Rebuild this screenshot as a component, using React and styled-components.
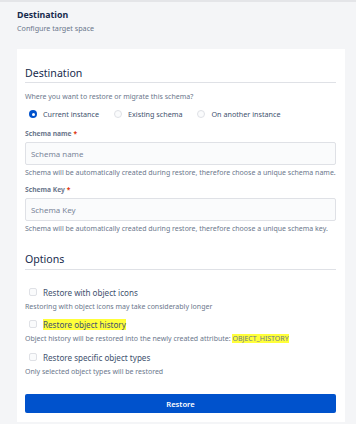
import React from "react";
import styled, { createGlobalStyle } from "styled-components";

const GlobalStyle = createGlobalStyle`
  html, body {
    margin: 0;
    padding: 0;
    background: #f4f5f7;
  }
  body {
    font-family: "Noto Sans", "Open Sans", sans-serif;
    color: #172b4d;
  }
`;

const Page = styled.div`
  width: 356px;
  height: 424px;
  box-sizing: border-box;
  border-top: 2px solid #e4e5e8;
  padding: 7px 11px 0 17px;
  overflow: hidden;
`;

const PageTitle = styled.div`
  font-size: 8.8px;
  font-weight: 700;
  line-height: 12px;
  color: #172b4d;
`;

const PageSub = styled.div`
  font-size: 7.2px;
  line-height: 10px;
  color: #6b778c;
  margin: 2px 0 16px;
`;

const Card = styled.div`
  background: #fff;
  padding: 17px 9px 9px 8px;
  display: flex;
  flex-direction: column;
`;

const SectionTitle = styled.div`
  font-size: 10.6px;
  line-height: 14px;
  color: #172b4d;
  padding-bottom: ${(p) => p.$pb || 2}px;
  border-bottom: 1px solid #dfe1e6;
  margin-top: ${(p) => p.$mt || 0}px;
`;

const Hint = styled.div`
  font-size: 7px;
  line-height: 10px;
  color: #6b778c;
  white-space: nowrap;
  margin-top: ${(p) => p.$mt || 3}px;
`;

const RadioRow = styled.div`
  display: flex;
  align-items: center;
  gap: 15px;
  height: 10px;
  padding-left: 4px;
  margin-top: 7px;
`;

const RadioItem = styled.label`
  display: flex;
  align-items: center;
  gap: 6px;
  font-size: 7.2px;
  color: #42526e;
`;

const RadioDot = styled.span`
  width: 8px;
  height: 8px;
  border-radius: 50%;
  box-sizing: border-box;
  background: ${(p) => (p.$on ? "#0052cc" : "#fafbfc")};
  border: ${(p) => (p.$on ? "none" : "1px solid #dfe1e6")};
  display: flex;
  align-items: center;
  justify-content: center;
  &::after {
    content: "";
    width: 3px;
    height: 3px;
    border-radius: 50%;
    background: ${(p) => (p.$on ? "#fff" : "transparent")};
  }
`;

const FieldLabel = styled.div`
  font-size: 6.7px;
  font-weight: 700;
  line-height: 10px;
  color: #6b778c;
  margin-top: ${(p) => p.$mt || 7}px;
`;

const Req = styled.span`
  color: #de350b;
  margin-left: 2px;
`;

const Input = styled.input`
  box-sizing: border-box;
  width: 100%;
  height: 23px;
  margin: 3px 0 0;
  border: 1px solid #dfe1e6;
  border-radius: 2px;
  background: #fafbfc;
  padding: 0 5px;
  font-family: inherit;
  font-size: 7.9px;
  color: #172b4d;
  outline: none;
  &::placeholder {
    color: #7a869a;
  }
`;

const CheckRow = styled.label`
  display: flex;
  align-items: center;
  gap: 6px;
  height: 12px;
  padding-left: 4px;
  font-size: 8.1px;
  color: #42526e;
  margin-top: ${(p) => p.$mt || 6}px;
`;

const Box = styled.span`
  width: 8px;
  height: 8px;
  box-sizing: border-box;
  border: 1px solid #dfe1e6;
  border-radius: 2px;
  background: #fafbfc;
`;

const Mark = styled.span`
  background: #ffff3a;
`;

const Button = styled.button`
  margin-top: 17px;
  height: 19px;
  border: none;
  border-radius: 2px;
  background: #0052cc;
  color: #fff;
  font-family: inherit;
  font-size: 7.6px;
  font-weight: 600;
  cursor: pointer;
`;

export default function App() {
  return (
    <Page>
      <GlobalStyle />
      <PageTitle>Destination</PageTitle>
      <PageSub>Configure target space</PageSub>
      <Card>
        <SectionTitle>Destination</SectionTitle>
        <Hint $mt={9}>Where you want to restore or migrate this schema?</Hint>
        <RadioRow>
          <RadioItem>
            <RadioDot $on />
            Current instance
          </RadioItem>
          <RadioItem>
            <RadioDot />
            Existing schema
          </RadioItem>
          <RadioItem>
            <RadioDot />
            On another instance
          </RadioItem>
        </RadioRow>
        <FieldLabel $mt={10}>
          Schema name<Req>*</Req>
        </FieldLabel>
        <Input placeholder="Schema name" />
        <Hint>
          Schema will be automatically created during restore, therefore choose a unique schema name.
        </Hint>
        <FieldLabel>
          Schema Key<Req>*</Req>
        </FieldLabel>
        <Input placeholder="Schema Key" />
        <Hint>
          Schema will be automatically created during restore, therefore choose a unique schema key.
        </Hint>
        <SectionTitle $mt={18} $pb={3}>
          Options
        </SectionTitle>
        <CheckRow $mt={16}>
          <Box />
          Restore with object icons
        </CheckRow>
        <Hint $mt={4}>Restoring with object icons may take considerably longer</Hint>
        <CheckRow>
          <Box />
          <Mark>Restore object history</Mark>
        </CheckRow>
        <Hint $mt={4}>
          Object history will be restored into the newly created attribute: <Mark>OBJECT_HISTORY</Mark>
        </Hint>
        <CheckRow $mt={7}>
          <Box />
          Restore specific object types
        </CheckRow>
        <Hint $mt={4}>Only selected object types will be restored</Hint>
        <Button>Restore</Button>
      </Card>
    </Page>
  );
}
